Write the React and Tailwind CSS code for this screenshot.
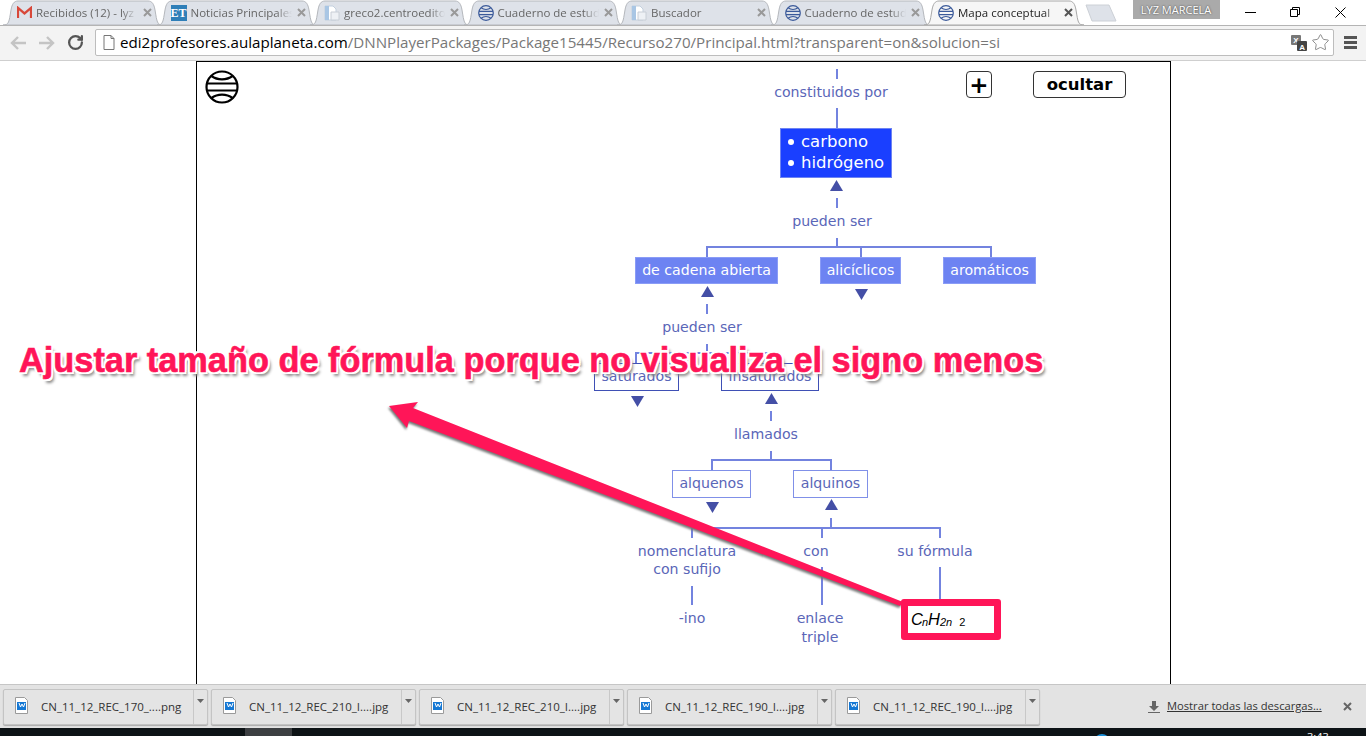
import React from 'react';
import { RotateCw, Star } from 'lucide-react';

const tabs = [
  { title: 'Recibidos (12) - lyz', icon: 'gmail' },
  { title: 'Noticias Principales', icon: 'et' },
  { title: 'greco2.centroeditorial', icon: 'doc' },
  { title: 'Cuaderno de estudio', icon: 'globe' },
  { title: 'Buscador', icon: 'doc' },
  { title: 'Cuaderno de estudio', icon: 'globe' },
  { title: 'Mapa conceptual', icon: 'globe', active: true },
];

const downloads = [
  'CN_11_12_REC_170_....png',
  'CN_11_12_REC_210_I....jpg',
  'CN_11_12_REC_210_I....jpg',
  'CN_11_12_REC_190_I....jpg',
  'CN_11_12_REC_190_I....jpg',
];

const Globe = ({ className, color = '#000', width = 2.2 }) => (
  <svg viewBox="0 0 34 34" className={className} fill="none" stroke={color} strokeWidth={width}>
    <circle cx="17" cy="17" r="15.5" />
    <path d="M2 13.5h30M2 20.5h30" />
    <path d="M6.5 6c6 4.5 15 4.5 21 0M6.5 28c6-4.5 15-4.5 21 0" />
  </svg>
);

const DocIcon = () => (
  <svg viewBox="0 0 16 16" className="w-4 h-4 shrink-0">
    <path d="M1 1h8l3 3v11H1z" fill="#fff" stroke="#c3d0de" />
    <path d="M1 1h4v14H1z" fill="#a9c6e4" />
    <path d="M7 7h8v8H7z" fill="#eef1f5" stroke="#c8ced6" />
  </svg>
);

const TabIcon = ({ type }) => {
  if (type === 'gmail') {
    return (
      <svg viewBox="0 0 16 14" className="w-[15px] h-[13px] shrink-0">
        <path d="M1 13V2l7 6 7-6v11" fill="none" stroke="#d8483a" strokeWidth="2.4" />
      </svg>
    );
  }
  if (type === 'et') {
    return (
      <span className="w-4 h-4 shrink-0 bg-[#2f7fb8] text-white text-[12px] leading-4 font-bold text-center font-['Liberation_Serif',serif]">
        ET
      </span>
    );
  }
  if (type === 'doc') return <DocIcon />;
  return <Globe className="w-4 h-4 shrink-0" color="#3b5a9a" width={2.6} />;
};

const CloseX = ({ className }) => (
  <svg viewBox="0 0 9 9" className={`w-[9px] h-[9px] shrink-0 ${className}`} stroke="currentColor" strokeWidth="2">
    <path d="M1 1l7 7M8 1L1 8" />
  </svg>
);

const Tab = ({ title, icon, active }) => (
  <div className={`relative w-[160px] h-[25px] shrink-0 -mr-[6.5px] ${active ? 'z-10' : ''}`}>
    <svg viewBox="0 0 160 25" className="absolute inset-0 w-full h-full">
      <path
        d="M0 25C6 25 6 22 8 10 9 4 11 1 15 1H145C149 1 151 4 152 10 154 22 154 25 160 25Z"
        fill={active ? '#f6f6f6' : '#dee2e9'}
        stroke={active ? '#a8a8a8' : '#b4b7bc'}
      />
    </svg>
    <div className="relative flex items-center h-full pl-[14px] pr-[11px]">
      <TabIcon type={icon} />
      <span
        className={`ml-[4px] w-[101px] overflow-hidden whitespace-nowrap text-[11.5px] [mask-image:linear-gradient(to_right,#000_85%,transparent)] ${active ? 'text-[#222]' : 'text-[#666]'}`}
      >
        {title}
      </span>
      <CloseX className={`ml-auto ${active ? 'text-[#555]' : 'text-[#999]'}`} />
    </div>
  </div>
);

const Triangle = ({ className, down }) => (
  <svg viewBox="0 0 13 11" className={`absolute w-[13px] h-[11px] ${className}`}>
    <path d={down ? 'M0 0h13L6.5 11z' : 'M6.5 0L13 11H0z'} fill="#444fa6" />
  </svg>
);

const Label = ({ className, children }) => (
  <div
    className={`absolute -translate-x-1/2 -translate-y-1/2 whitespace-nowrap text-center text-[14.15px] text-[#5a66b8] ${className}`}
  >
    {children}
  </div>
);

const SolidBox = ({ className, children }) => (
  <div
    className={`absolute flex items-center justify-center h-[27px] bg-[#6d83f2] border border-[#8a9cf6] text-white text-[14.15px] ${className}`}
  >
    {children}
  </div>
);

const OutlineBox = ({ className, children }) => (
  <div
    className={`absolute flex items-center justify-center bg-white border text-[#5a66b8] text-[14.15px] ${className}`}
  >
    {children}
  </div>
);

const Bullet = ({ children }) => (
  <div className="flex items-center">
    <span className="w-[6px] h-[6px] mr-[7px] rounded-full bg-white" />
    {children}
  </div>
);

// connectors use page coordinates through the viewBox
const Connectors = () => (
  <svg viewBox="197 62 973 622" className="absolute inset-0 w-full h-full" fill="none" stroke="#7383df" strokeWidth="2">
    <path d="M837 69v10M837 108v20M837 198v10M837 238v9" />
    <path d="M707 257v-10h284v10M861 247v10" />
    <path d="M707 304v10M707 344v9M636 364v-11h135v11" />
    <path d="M771 411v10M771 451v9M712 470v-10h119v10" />
    <path d="M831 518v10M692 538v-10h248v10M822 528v10" />
    <path d="M692 586v19M822 567v38M940 567v33" />
  </svg>
);

const ConceptMap = () => (
  <div className="relative ml-[196px] w-[975px] h-full border-x border-t border-black bg-white font-['DejaVu_Sans',sans-serif]">
    <Globe className="absolute left-[8px] top-[8px] w-[34px] h-[34px]" />
    <div className="absolute left-[769px] top-[9px] w-[26px] h-[27px] pt-[2px] flex items-center justify-center rounded-[4px] border border-[#333] text-[23px] font-bold leading-none text-black">
      +
    </div>
    <div className="absolute left-[836px] top-[9px] w-[93px] h-[27px] pt-[2px] flex items-center justify-center rounded-[4px] border border-[#333] text-[16.5px] font-bold text-black">
      ocultar
    </div>

    <Connectors />

    <Label className="left-[634px] top-[31px]">constituidos por</Label>
    <div className="absolute left-[583px] top-[66px] w-[112px] h-[50px] pl-[7px] pb-[2px] flex flex-col justify-center bg-[#1a3fff] border border-[#6d83f2] text-white text-[16.5px] leading-[21px]">
      <Bullet>carbono</Bullet>
      <Bullet>hidrógeno</Bullet>
    </div>
    <Triangle className="left-[633px] top-[118px]" />
    <Label className="left-[635px] top-[160px]">pueden ser</Label>

    <SolidBox className="left-[438px] top-[195px] w-[143px]">de cadena abierta</SolidBox>
    <SolidBox className="left-[623px] top-[195px] w-[81px]">alicíclicos</SolidBox>
    <SolidBox className="left-[746px] top-[195px] w-[93px]">aromáticos</SolidBox>
    <Triangle className="left-[504px] top-[224px]" />
    <Triangle className="left-[658px] top-[227px]" down />
    <Label className="left-[505px] top-[266px]">pueden ser</Label>

    <OutlineBox className="left-[397px] top-[301px] w-[85px] h-[28px] border-[#3f50b5]">saturados</OutlineBox>
    <OutlineBox className="left-[524px] top-[301px] w-[98px] h-[28px] border-[#3f50b5]">insaturados</OutlineBox>
    <Triangle className="left-[434px] top-[334px]" down />
    <Triangle className="left-[568px] top-[331px]" />
    <Label className="left-[569px] top-[373px]">llamados</Label>

    <OutlineBox className="left-[475px] top-[408px] w-[79px] h-[28px] border-[#8090e8]">alquenos</OutlineBox>
    <OutlineBox className="left-[596px] top-[408px] w-[75px] h-[28px] border-[#8090e8]">alquinos</OutlineBox>
    <Triangle className="left-[509px] top-[440px]" down />
    <Triangle className="left-[628px] top-[437px]" />

    <Label className="left-[490px] top-[498px] leading-[18px]">
      nomenclatura
      <br />
      con sufijo
    </Label>
    <Label className="left-[619px] top-[490px]">con</Label>
    <Label className="left-[738px] top-[490px]">su fórmula</Label>
    <Label className="left-[495px] top-[557px]">-ino</Label>
    <Label className="left-[623px] top-[566px] leading-[19px]">
      enlace
      <br />
      triple
    </Label>
  </div>
);

const DownloadItem = ({ name }) => (
  <div className="flex w-[205px] h-[36px] shrink-0 mr-[3px] rounded-[2px] border border-[#c4c4c4] bg-[#e4e4e4] shadow-[0_1px_1px_#aaa]">
    <div className="flex items-center flex-1 pl-[11px] border-r border-[#c8c8c8]">
      <svg viewBox="0 0 13 17" className="w-[13px] h-[17px] shrink-0 -mt-[3px]">
        <path d="M.5.5h9l3 3v13H.5z" fill="#fff" stroke="#9a9a9a" />
        <path d="M2 5h9v8H2z" fill="#1578d4" />
        <path d="M4 6l1.5 4L7 7l1.5 3L10 6" fill="none" stroke="#fff" />
      </svg>
      <span className="ml-[13px] whitespace-nowrap text-[11.5px] text-[#333]">{name}</span>
    </div>
    <div className="flex justify-center w-[13px] pt-[9px]">
      <svg viewBox="0 0 7 4" className="w-[7px] h-[4px]">
        <path d="M0 0h7L3.5 4z" fill="#666" />
      </svg>
    </div>
  </div>
);

const Annotation = () => (
  <>
    <svg
      viewBox="0 0 1366 736"
      className="absolute inset-0 w-full h-full pointer-events-none [filter:drop-shadow(-1px_2px_1px_#777)]"
    >
      <path d="M389 406L418 402 413 408 903 602 900 606 409 421 407 428Z" fill="#ff1558" />
    </svg>
    <div className="absolute left-[901px] top-[599px] w-[100px] h-[41px] pl-[3px] flex items-center rounded-[3px] border-[7px] border-[#ff1558] bg-white font-['Liberation_Sans',sans-serif] italic text-[16.5px] text-black">
      C<sub className="text-[11px] -ml-[1px]">n</sub>H<sub className="text-[11px]">2n</sub>
      <sub className="not-italic text-[11px] ml-[7px]">2</sub>
    </div>
    <div className="absolute left-[19px] top-[338px] whitespace-nowrap font-['Liberation_Sans',sans-serif] font-bold text-[34.35px] leading-[44px] text-[#ff1558] [-webkit-text-stroke:0.6px_#ff1558] [text-shadow:2px_0_0_#fff,-2px_0_0_#fff,0_2px_0_#fff,0_-2px_0_#fff,2px_2px_0_#fff,-2px_2px_0_#fff,2px_-2px_0_#fff,-2px_-2px_0_#fff,3px_4px_3px_#888]">
      Ajustar tamaño de fórmula porque no visualiza el signo menos
    </div>
  </>
);

export default function App() {
  return (
    <div className="relative flex flex-col w-[1366px] h-[736px] overflow-hidden bg-white font-['Open_Sans',sans-serif]">
      {/* title strip */}
      <div className="relative z-10 flex items-start h-[25px] shrink-0 bg-white pl-[3px]">
        {tabs.map((tab, i) => (
          <Tab key={i} {...tab} />
        ))}
        <svg viewBox="0 0 32 18" className="w-[32px] h-[18px] mt-[4px] ml-[7px] shrink-0">
          <path d="M1 1H24L31 17H7Z" fill="#dee2e9" stroke="#ccd0d6" />
        </svg>
        <div className="ml-[16px] w-[87px] h-[19px] bg-[#aaa] text-center text-[11px] leading-[19px] text-white [text-shadow:0_0_2px_#333]">
          LYZ MARCELA
        </div>
        <div className="ml-[25px] mt-[12px] w-[11px] h-px bg-black" />
        <svg viewBox="0 0 10 10" className="ml-[34px] mt-[7px] w-[10px] h-[10px]" fill="none" stroke="#000">
          <path d="M.5 2.5h7v7h-7zM2.5 2.5v-2h7v7h-2" />
        </svg>
        <svg viewBox="0 0 11 11" className="ml-[35px] mt-[7px] w-[11px] h-[11px]" stroke="#000">
          <path d="M.5.5l10 10M10.5.5l-10 10" />
        </svg>
      </div>

      {/* toolbar */}
      <div className="flex items-center pb-[1px] h-[36px] shrink-0 bg-[#f3f3f3] border-y border-y-[#b4b4b4] border-b-[#cfcfcf]">
        <svg viewBox="0 0 16 14" className="ml-[10px] w-[16px] h-[14px]" fill="none" stroke="#c4c4c4" strokeWidth="2.4">
          <path d="M16 7H2M8 1L2 7l6 6" />
        </svg>
        <svg viewBox="0 0 16 14" className="ml-[13px] w-[16px] h-[14px]" fill="none" stroke="#c4c4c4" strokeWidth="2.4">
          <path d="M0 7h14M8 1l6 6-6 6" />
        </svg>
        <RotateCw className="ml-[12px] w-[17px] h-[17px] text-[#555]" strokeWidth={3.2} />
        <div className="ml-[11px] flex items-center w-[1239px] h-[27px] rounded-[2px] border border-[#bdbdbd] bg-white">
          <svg viewBox="0 0 12 15" className="ml-[7px] w-[12px] h-[15px]" fill="#fff" stroke="#777">
            <path d="M1 .5h7l3 3v11H1zM8 .5v3h3" />
          </svg>
          <span className="ml-[5px] whitespace-nowrap text-[15.14px] text-[#777]">
            <span className="text-black">edi2profesores.aulaplaneta.com</span>
            /DNNPlayerPackages/Package15445/Recurso270/Principal.html?transparent=on&amp;solucion=si
          </span>
          <svg viewBox="0 0 16 16" className="ml-auto w-[16px] h-[16px] font-['Liberation_Sans',sans-serif] font-bold">
            <rect x="0" y="0" width="10" height="10" rx="1" fill="#777" />
            <text x="2.2" y="8" fontSize="8" fill="#fff">X</text>
            <rect x="6" y="6" width="10" height="10" rx="1" fill="#444" />
            <text x="8.2" y="14.5" fontSize="8" fill="#fff">A</text>
          </svg>
          <Star className="ml-[4px] mr-[3px] w-[19px] h-[19px] text-[#888]" strokeWidth={1.2} />
        </div>
        <div className="ml-[10px] flex flex-col gap-[2px]">
          <div className="w-[13px] h-[3px] bg-[#555]" />
          <div className="w-[13px] h-[3px] bg-[#555]" />
          <div className="w-[13px] h-[3px] bg-[#555]" />
        </div>
      </div>

      {/* page */}
      <div className="flex-1 min-h-0">
        <ConceptMap />
      </div>

      {/* downloads bar */}
      <div className="flex items-center h-[44px] shrink-0 pl-[3px] bg-[#e3e3e3] border-t border-[#c6c6c6]">
        {downloads.map((name, i) => (
          <DownloadItem key={i} name={name} />
        ))}
        <svg viewBox="0 0 12 12" className="ml-[105px] w-[12px] h-[12px]" fill="#666">
          <path d="M4 0h4v5h3L6 10 1 5h3zM0 11h12v1H0z" />
        </svg>
        <span className="ml-[7px] whitespace-nowrap text-[11.2px] text-[#333] underline">Mostrar todas las descargas...</span>
        <CloseX className="ml-[21px] text-[#666]" />
      </div>

      {/* taskbar, cut off by the window */}
      <div className="flex h-[8px] shrink-0 bg-[#0d1316] overflow-hidden">
        <div className="ml-[245px] w-[47px] bg-[#3c3f42]" />
        <div className="ml-[802px] mt-[6px] w-[16px] h-[8px] rounded-t-full bg-[#1a8fd8]" />
        <div className="ml-[197px] mt-[3px] text-[11px] leading-[12px] text-white">3:43</div>
      </div>

      <Annotation />
    </div>
  );
}
